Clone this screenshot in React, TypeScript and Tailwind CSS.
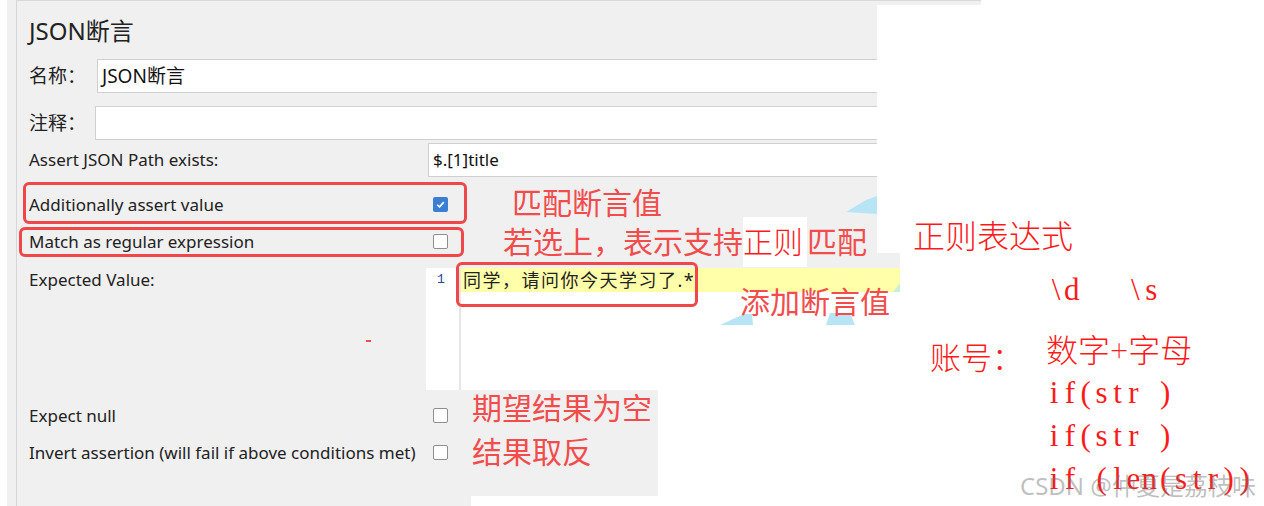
import { FC, ReactNode } from "react";

const GRAY = "bg-[#f0f0f0]";

const Box: FC<{ on?: boolean }> = ({ on }) =>
  on ? (
    <span className="w-[15px] h-[15px] shrink-0 rounded-[2px] bg-[#3b7fd4] flex items-center justify-center mb-[2px]">
      <svg viewBox="0 0 12 12" className="w-[11px] h-[11px]">
        <path d="M2.4 6.3 L5 8.6 L9.6 3.4" stroke="white" strokeWidth="1.8" fill="none" />
      </svg>
    </span>
  ) : (
    <span className="w-[15px] h-[15px] shrink-0 rounded-[2px] border border-[#8e8e8e] bg-white mb-[2px]" />
  );

const CheckRow: FC<{ label: string; on?: boolean; className?: string }> = ({
  label,
  on,
  className,
}) => (
  <div className={`h-[18px] flex items-center ${className ?? ""}`}>
    <span className="w-[404px] text-[17px] leading-[18px] text-[#222] whitespace-nowrap">{label}</span>
    <Box on={on} />
  </div>
);

const Field: FC<{ label: string; labelW: string; children?: ReactNode; className?: string; small?: boolean }> = ({
  label,
  labelW,
  children,
  className,
  small,
}) => (
  <div className={`h-[34px] flex items-center ${className ?? ""}`}>
    <span className={`${labelW} ${small ? "text-[17px]" : "text-[19px]"} text-[#222] shrink-0`}>{label}</span>
    <div className="flex-1 h-full bg-white border border-r-0 border-[#d0d0d0] flex items-center pl-[4px] text-[19px] text-[#111]">
      {children}
    </div>
  </div>
);

const Note: FC<{ className: string; children: ReactNode }> = ({ className, children }) => (
  <div className={`absolute text-[30px] leading-[30px] text-[#f24c4c] whitespace-nowrap ${className}`}>
    {children}
  </div>
);

// SimSun-like half width latin: serif glyphs in fixed cells
const Code: FC<{ text: string; className?: string }> = ({ text, className }) => (
  <div className={`flex font-['Liberation_Serif',serif] text-[31px] ${className ?? ""}`}>
    {text.split("").map((c, i) => (
      <span key={i} className="w-[15.9px] text-center">
        {c === " " ? "\u00a0" : c}
      </span>
    ))}
  </div>
);

export default function App() {
  return (
    <div className="relative w-[1264px] h-[506px] overflow-hidden bg-white flex font-['Noto_Sans','Noto_Sans_CJK_SC',sans-serif]">
      {/* jmeter panel */}
      <div className="ml-[7px] flex shrink-0">
        <div className={`w-[9px] ${GRAY}`} />
        <div className="w-px bg-[#d6d6d6]" />
        <div className="w-[860px] flex flex-col">
          <div className={`w-[860px] ${GRAY} border-t border-[#d9d9d9] pl-[12px] pb-[2px]`}>
            <div className="h-[58px] pt-[14px] text-[24px] leading-[32px] text-[#222]">JSON断言</div>
            <Field label="名称：" labelW="w-[68px]">JSON断言</Field>
            <Field label="注释：" labelW="w-[66px]" className="mt-[13px]" />
            <Field label="Assert JSON Path exists:" labelW="w-[399px]" className="mt-[3px]" small>
              <span className="text-[17px]">$.[1]title</span>
            </Field>
            <CheckRow label="Additionally assert value" on className="mt-[19px]" />
            <CheckRow label="Match as regular expression" className="mt-[19px]" />
          </div>

          {/* expected value + editor */}
          <div className={`w-[883px] h-[137px] ${GRAY} flex pl-[12px]`}>
            <div className="w-[397px] pt-[18px] text-[17px] leading-[18px] text-[#222]">Expected Value:</div>
            <div className="flex-1 mt-[15px] bg-white flex">
              <div className="w-[33px] pl-[11px] pt-[3px] text-[13px] leading-[18px] text-[#2a46a8] font-['Liberation_Mono',monospace]">
                1
              </div>
              <div className="w-[2px] bg-[#e6e6e6]" />
              <div className="flex-1">
                <div className="h-[24px] bg-[#ffffaa] pl-[2px] flex items-center text-[18px] tracking-[1.5px] text-[#222]">
                  同学，请问你今天学习了.*
                </div>
              </div>
            </div>
          </div>

          <div className={`w-[641px] h-[106px] ${GRAY} pl-[12px]`}>
            <CheckRow label="Expect null" className="mt-[17px]" />
            <CheckRow label="Invert assertion (will fail if above conditions met)" className="mt-[19px]" />
          </div>
          <div className={`w-[454px] h-[10px] ${GRAY}`} />
        </div>
      </div>

      {/* notes on the right */}
      <div className="w-[387px] shrink-0 flex flex-col text-[#ff1a1a]">
        <div className={`h-[5px] w-[104px] ${GRAY} border-t border-[#d9d9d9]`} />
        <div className="pl-[36px] mt-[211px] text-[32px] leading-[40px] font-extralight">正则表达式</div>
        <Code text="\d   \s" className="pl-[171px] mt-[14px] leading-[40px]" />
        <div className="flex mt-[18px]">
          <div className="ml-[53px] w-[116px] mt-[8px] text-[31px] leading-[43px] font-extralight">账号：</div>
          <div className="flex flex-col">
            <div className="text-[32px] leading-[43px] font-extralight">数字+字母</div>
            <Code text="if(str )" className="leading-[43px]" />
            <Code text="if(str )" className="leading-[43px]" />
            <Code text="if (len(str))" className="leading-[43px]" />
          </div>
        </div>
      </div>

      {/* pasted image leftovers */}
      <svg className="absolute left-0 top-0 w-[1264px] h-[506px] pointer-events-none" viewBox="0 0 1264 506">
        <polygon points="846,212 866,200 877,196 877,214" fill="#b7e5f6" />
        <polygon points="720,325 744,314 752,314 753,325" fill="#b7e5f6" />
        <polygon points="826,325 830,313 850,313 855,325" fill="#b7e5f6" />
        <polygon points="893,292 900,283 900,292" fill="#cdeed6" />
      </svg>

      {/* red highlight boxes */}
      <div className="absolute left-[23px] top-[182px] w-[444px] h-[42px] border-[3px] border-[#f04848] rounded-[6px]" />
      <div className="absolute left-[19px] top-[227px] w-[445px] h-[30px] border-[3px] border-[#f04848] rounded-[6px]" />
      <div className="absolute left-[456px] top-[262px] w-[242px] h-[45px] border-[3px] border-[#f04848] rounded-[6px]" />
      <div className="absolute left-[366px] top-[340px] w-[5px] h-[2px] bg-[#f05050]" />

      <Note className="left-[512px] top-[188px]">匹配断言值</Note>
      <Note className="left-[503px] top-[227px] flex items-center h-[30px]">
        <span>若选上，表示支持</span>
        <span className="bg-white h-[50px] w-[64px] flex items-center text-[#ff1a1a] font-extralight">正则</span>
        <span>匹配</span>
      </Note>
      <Note className="left-[740px] top-[287px]">添加断言值</Note>
      <Note className="left-[472px] top-[393px]">期望结果为空</Note>
      <Note className="left-[472px] top-[437px]">结果取反</Note>

      <div className="absolute left-[1020px] top-[470px] text-[24px] leading-[32px] text-[rgba(110,110,110,0.45)] whitespace-nowrap">
        CSDN @仲夏是荔枝味
      </div>
    </div>
  );
}
